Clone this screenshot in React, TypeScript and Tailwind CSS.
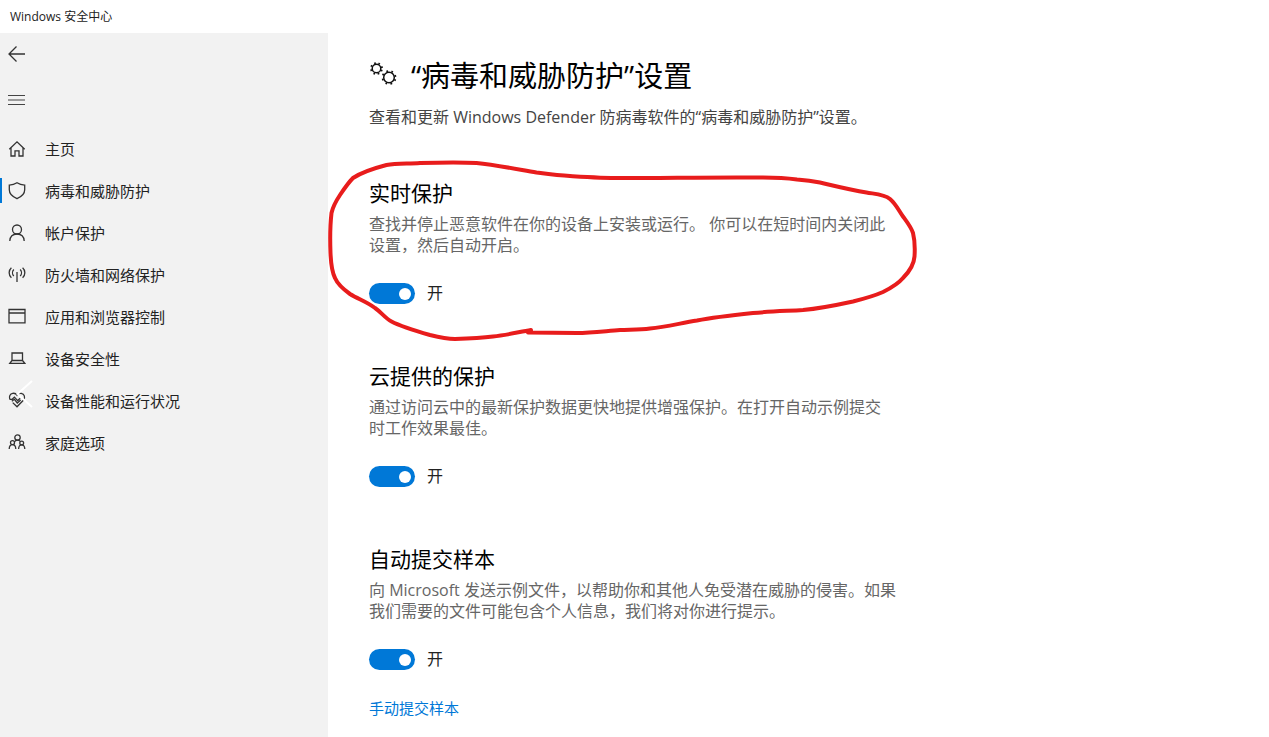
import { useState } from "react";
import type { ReactNode } from "react";

function Icon({ children }: { children: ReactNode }) {
  return (
    <svg
      viewBox="0 0 18 18"
      className="w-[18px] h-[18px] shrink-0"
      fill="none"
      stroke="#333"
      strokeWidth="1.3"
      aria-hidden="true"
    >
      {children}
    </svg>
  );
}

const navItems = [
  {
    label: "主页",
    icon: <path d="M1.3 9.3 9 1.8l7.7 7.5M3 8v8h4v-5.2h4V16h4V8" />,
  },
  {
    label: "病毒和威胁防护",
    active: true,
    icon: <path d="M9 .8c2.3 1.500 4.800 2.200 7.700 2.300v4.700c0 4-3 6.900-7.700 8.900C4.300 14.700 1.300 11.800 1.300 7.800V3.100C4.200 3 6.700 2.300 9 .8Z" />,
  },
  {
    label: "帐户保护",
    icon: (
      <>
        <circle cx="9" cy="5.500" r="4.500" />
        <path d="M1.800 17c.3-4.300 3.200-7 7.200-7s6.900 2.700 7.200 7" />
      </>
    ),
  },
  {
    label: "防火墙和网络保护",
    icon: (
      <path d="M9 6v10M5.800 3.500c-1.700 1.800-1.700 4.700 0 6.500M12.200 3.500c1.700 1.800 1.700 4.700 0 6.500M3.400 1.800c-3 2.700-3 7.200 0 9.900M14.600 1.800c3 2.700 3 7.200 0 9.900" />
    ),
  },
  {
    label: "应用和浏览器控制",
    icon: <path d="M1 1.500h16v13.300H1ZM1 5h16" />,
  },
  {
    label: "设备安全性",
    icon: <path d="M4 3h10.500v7.500H4ZM4 10.500 1.800 13.300h15l-2.300-2.800" />,
  },
  {
    label: "设备性能和运行状况",
    icon: (
      <>
        <path d="M1.800 7.200C.8 4.600 2 1.800 4.700 1.300 6.600 1 8.200 1.800 9 3.200c.8-1.400 2.400-2.200 4.300-1.900 3.100.6 4.200 4 2.300 6.700L9 14.800 4.700 10.600" />
        <path d="M1.600 7.300h2.600l2.200-2.200 3.300 3.500 2.500-2.300M3.800 9.300l2.600-2L9.300 11l3.400-3" />
      </>
    ),
  },
  {
    label: "家庭选项",
    icon: (
      <>
        <circle cx="9.500" cy="3.500" r="2.700" />
        <circle cx="4.500" cy="8.700" r="2" />
        <circle cx="13.700" cy="9" r="1.900" />
        <path d="M1.200 15c.1-2.700 1.300-4.300 3.300-4.300S7.700 12.300 7.800 15M10.600 15c.1-2.500 1.200-4.100 3.100-4.100s3 1.600 3.100 4.100M6.300 8c.7-1.100 1.800-1.800 3.200-1.800 1.100 0 2 .4 2.700 1.200" />
      </>
    ),
  },
];

const sections = [
  {
    id: "realtime",
    title: "实时保护",
    text: "查找并停止恶意软件在你的设备上安装或运行。 你可以在短时间内关闭此设置，然后自动开启。",
    circled: true,
  },
  {
    id: "cloud",
    title: "云提供的保护",
    text: "通过访问云中的最新保护数据更快地提供增强保护。在打开自动示例提交时工作效果最佳。",
  },
  {
    id: "samples",
    title: "自动提交样本",
    text: "向 Microsoft 发送示例文件，以帮助你和其他人免受潜在威胁的侵害。如果我们需要的文件可能包含个人信息，我们将对你进行提示。",
    link: "手动提交样本",
  },
];

function Toggle({ id, title }: { id: string; title: string }) {
  const [on, setOn] = useState(true);
  return (
    <div className="mt-[27px] flex h-[21px] items-center gap-3">
      <input
        id={id}
        type="checkbox"
        role="switch"
        aria-label={title}
        checked={on}
        onChange={(e) => setOn(e.target.checked)}
        className="flex h-[21px] w-[46px] shrink-0 appearance-none items-center rounded-full bg-[#8a8a8a] px-1 before:h-3 before:w-3 before:rounded-full before:bg-white checked:justify-end checked:bg-[#0078d7]"
      />
      <label htmlFor={id} className="text-base leading-[21px] text-[#222]">
        {on ? "开" : "关"}
      </label>
    </div>
  );
}

// Hand-drawn marker loop around the first section
function MarkerLoop() {
  return (
    <svg
      viewBox="328 158 590 184"
      className="pointer-events-none absolute -left-[41px] -top-[21px] h-[184px] w-[590px] max-w-none"
      fill="none"
      stroke="#e81c1c"
      strokeWidth="4"
      strokeLinecap="round"
      strokeLinejoin="round"
      aria-hidden="true"
    >
      <path d="M531 330C519 332 507 335 493 336.500C480 338 468 338.500 455 339C447 339 438 337 430 335C416 331 402 327 391.500 321.500C385 318 381 312 375 308C367 302 358 299 350 294C343 289 338 285 335 278C331 270 331 262 330.500 253C330 240 330 226 331.500 213C333 206 336 201 340 195C344 189 348 183 353 178C362 172 375 168 386.500 165C397 163 409 164 420 163C439 162.500 458 162 476.500 163C496 165 516 169 536.500 172.500C548 174 559 175.500 570 176C587 177 603 178 620 178C668 178 715 177 763 177.500C774 177.500 786 178 797 179.500C805 180 813 181 820 182.500C835 186 851 190 866.500 192.500C875 194 884 194 890 199C896 204 899 211 903 216.500C907 222 911 227 913 233C915 241 915 249 914.500 256.500C914 264 909 272 903 278C898 284 891 288 883 292C874 296 863 299 853 301.500C837 305 820 308.500 803 310C786 311 770 311.500 753 313C734 315 715 317 697 320.500C681 323 666 327 650 328.500C640 330 630 329.500 620 330C606 331 591 333 577 333L528 332.500" />
    </svg>
  );
}

export default function App() {
  return (
    <div className="flex min-h-screen flex-col bg-white font-['Open_Sans','Noto_Sans_CJK_SC',sans-serif] text-black">
      <header className="flex h-[33px] shrink-0 items-center px-[10px] text-xs text-[#222]">
        Windows 安全中心
      </header>

      <div className="flex flex-1">
        <aside className="w-[328px] shrink-0 bg-[#f2f2f2]">
          <button type="button" aria-label="返回" className="flex h-[42px] items-center px-2">
            <svg viewBox="0 0 18 18" className="h-[18px] w-[18px]" fill="none" stroke="#333" strokeWidth="1.3" aria-hidden="true">
              <path d="M17 9H.8M8.500 1.500 1 9l7.500 7.500" />
            </svg>
          </button>
          <button type="button" aria-label="菜单" className="mt-1 flex h-[42px] items-center px-2">
            <svg viewBox="0 0 18 18" className="h-[18px] w-[18px]" fill="none" stroke="#444" strokeWidth="1.2" aria-hidden="true">
              <path d="M0 4.500h17M0 9h17M0 13.500h17" />
            </svg>
          </button>

          <nav className="mt-[7px]">
            <ul>
              {navItems.map((item) => (
                <li key={item.label} className="relative">
                  <a href="#" className="flex h-[42px] items-center gap-[19px] px-2 text-[15px] leading-5 text-[#222]">
                    <Icon>{item.icon}</Icon>
                    {item.label}
                  </a>
                  {item.active && (
                    <span className="absolute left-0 top-2 h-[25px] w-[2px] bg-[#0078d7]" />
                  )}
                  {item.label === "设备性能和运行状况" && (
                    <svg viewBox="0 0 18 28" className="absolute left-4 top-0 h-7 w-[18px]" fill="none" stroke="#fff" strokeWidth="2" aria-hidden="true">
                      <path d="M16 1 1.500 14 16 27" />
                    </svg>
                  )}
                </li>
              ))}
            </ul>
          </nav>
        </aside>

        <main className="min-w-0 flex-1 pl-[41px] pr-6 pt-[23px] pb-4">
          <div className="flex items-center gap-[14px]">
            <svg viewBox="0 0 28 28" className="h-7 w-7 shrink-0" fill="none" stroke="#111" aria-hidden="true">
              <circle cx="7.500" cy="6.500" r="4.300" strokeWidth="1.500" />
              <circle cx="7.500" cy="6.500" r="5.500" strokeWidth="1.800" strokeDasharray="1.600 2.720" transform="rotate(14 7.500 6.500)" />
              <circle cx="20" cy="15.500" r="5.300" strokeWidth="1.500" />
              <circle cx="20" cy="15.500" r="6.500" strokeWidth="1.800" strokeDasharray="1.700 3.405" transform="rotate(15 20 15.500)" />
            </svg>
            <h1 className="text-[29px] leading-10">“病毒和威胁防护”设置</h1>
          </div>
          <p className="mt-[11px] text-base leading-[21px] text-[#444]">
            查看和更新 Windows Defender 防病毒软件的“病毒和威胁防护”设置。
          </p>

          <div className="mt-[51px] flex flex-col gap-[58px]">
            {sections.map((s) => (
              <section key={s.id} className="relative">
                <h2 className="text-[21px] leading-7">{s.title}</h2>
                <p className="mt-[7px] max-w-[527px] text-base leading-[21px] text-[#666]">{s.text}</p>
                <Toggle id={s.id} title={s.title} />
                {s.link && (
                  <a href="#" className="mt-7 inline-block text-[15px] leading-[21px] text-[#0078d7]">
                    {s.link}
                  </a>
                )}
                {s.circled && <MarkerLoop />}
              </section>
            ))}
          </div>
        </main>
      </div>
    </div>
  );
}
